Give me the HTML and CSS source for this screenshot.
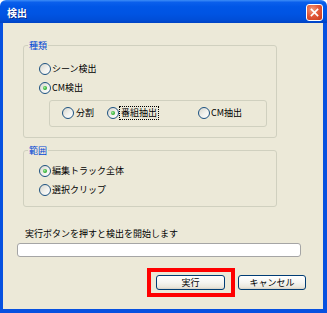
FILE: index.html
```html
<!DOCTYPE html>
<html lang="ja">
<head>
<meta charset="utf-8">
<title>検出</title>
<link rel="stylesheet" href="styles.css">
</head>
<body>
<div class="window">
  <div class="titlebar">
    <span class="title">検出</span>
    <span class="close">
      <svg width="17" height="17" viewBox="0 0 17 17">
        <path d="M5 5 L12 12 M12 5 L5 12" stroke="#fff" stroke-width="1.8" stroke-linecap="square"/>
      </svg>
    </span>
  </div>
  <div class="client">
    <div class="group g1">
      <span class="legend">種類</span>
      <div class="row"><span class="radio"></span><span class="lbl">シーン検出</span></div>
      <div class="row"><span class="radio on"></span><span class="lbl">CM検出</span></div>
      <div class="sub">
        <div class="row opt o1"><span class="radio"></span><span class="lbl">分割</span></div>
        <div class="row opt o2"><span class="radio on"></span><span class="lbl focus">番組抽出</span></div>
        <div class="row opt"><span class="radio"></span><span class="lbl">CM抽出</span></div>
      </div>
    </div>
    <div class="group g2">
      <span class="legend">範囲</span>
      <div class="row"><span class="radio on"></span><span class="lbl">編集トラック全体</span></div>
      <div class="row"><span class="radio"></span><span class="lbl">選択クリップ</span></div>
    </div>
    <div class="status">実行ボタンを押すと検出を開始します</div>
    <div class="progress"></div>
    <div class="buttons">
      <div class="btn-wrap">
        <button class="btn b1">実行</button>
        <span class="highlight"></span>
      </div>
      <button class="btn b2">キャンセル</button>
    </div>
  </div>
</div>
</body>
</html>
```
FILE: styles.css
```css
body {
  margin: 0;
  background: #ffffff;
  font-family: "Noto Sans CJK JP", "Noto Sans", sans-serif;
  font-size: 9px;
  color: #000;
}

.window {
  width: 327px;
  height: 313px;
  display: flex;
  flex-direction: column;
}

.titlebar {
  height: 23px;
  flex: none;
  box-sizing: border-box;
  padding: 2px 4px 0 7px;
  display: flex;
  align-items: center;
  justify-content: space-between;
  border-radius: 6px 6px 0 0;
  background: linear-gradient(to bottom, #3d8df7 0%, #0a5fec 10%, #0056e6 30%, #0054e3 60%, #004ed8 85%, #0043c4 100%);
}

.title {
  color: #fff;
  font-weight: bold;
  font-size: 10px;
  line-height: 12px;
  text-shadow: 1px 1px 0 #0b2a8a;
}

.close {
  width: 17px;
  height: 17px;
  box-sizing: border-box;
  border: 1px solid #fff;
  border-radius: 3px;
  background: radial-gradient(circle at 35% 30%, #f09a7c 0%, #e2593a 45%, #c8381a 100%);
  display: flex;
  align-items: center;
  justify-content: center;
}

.close svg {
  display: block;
  width: 15px;
  height: 15px;
}

.client {
  flex: 1;
  background: #ece9d8;
  border-style: solid;
  border-color: #0751e0;
  border-width: 0 4px 4px 3px;
  display: flex;
  flex-direction: column;
}

.group {
  position: relative;
  border: 1px solid #d0d0bf;
  border-radius: 3px;
  width: 254px;
  box-sizing: border-box;
}

.g1 {
  margin: 22px 0 0 20px;
  padding: 13px 0 10px 15px;
}

.g2 {
  margin: 12px 0 0 20px;
  padding: 10px 0 7px 15px;
}

.legend {
  position: absolute;
  top: -6px;
  left: 4px;
  padding: 0 1px;
  background: #ece9d8;
  color: #0046d5;
  line-height: 11px;
}

.row {
  display: flex;
  align-items: center;
  gap: 1px;
  height: 19px;
}

.lbl {
  line-height: 12px;
  white-space: nowrap;
}

.radio {
  width: 12px;
  height: 12px;
  box-sizing: border-box;
  border: 1px solid #1c5180;
  border-radius: 50%;
  background: linear-gradient(135deg, #d6d5cc 0%, #f2f2ee 55%, #ffffff 100%);
  flex: none;
  position: relative;
}

.radio.on::after {
  content: "";
  position: absolute;
  left: 3px;
  top: 3px;
  width: 4px;
  height: 4px;
  border-radius: 50%;
  background: radial-gradient(circle at 40% 40%, #a8eca8 0%, #3cb83c 50%, #1f8f1f 100%);
}

.sub {
  margin: 3px 9px 0 10px;
  padding: 2px 0 4px 12px;
  border: 1px solid #d0d0bf;
  border-radius: 3px;
  display: flex;
}

.o1 {
  width: 45px;
  flex: none;
}

.o1 .lbl {
  margin-left: 1px;
}

.o2 {
  width: 91px;
  flex: none;
}

.focus {
  outline: 1px dotted #000;
  outline-offset: 0;
  padding: 0 1px;
}

.status {
  margin: 21px 0 0 22px;
  height: 12px;
  line-height: 12px;
}

.progress {
  margin: 3px 0 0 14px;
  width: 284px;
  height: 14px;
  box-sizing: border-box;
  border: 1px solid #a5a5a5;
  border-radius: 3px;
  background: #ffffff;
}

.buttons {
  margin-top: 18px;
  padding-right: 17px;
  display: flex;
  justify-content: flex-end;
  gap: 13px;
}

.btn-wrap {
  position: relative;
  display: flex;
}

.btn {
  height: 15px;
  box-sizing: border-box;
  margin: 0;
  padding: 0;
  border: 1px solid #003c74;
  border-radius: 3px;
  background: linear-gradient(to bottom, #ffffff 0%, #f5f5f1 50%, #ebe8dd 85%, #d8d2c6 100%);
  font-family: "Noto Sans CJK JP", "Noto Sans", sans-serif;
  font-size: 9px;
  line-height: 12px;
  color: #000;
}

.b1 {
  width: 69px;
}

.b2 {
  width: 68px;
}

.highlight {
  position: absolute;
  top: -7px;
  left: -9px;
  right: -10px;
  bottom: -7px;
  border: 4px solid #ff0000;
}
```
